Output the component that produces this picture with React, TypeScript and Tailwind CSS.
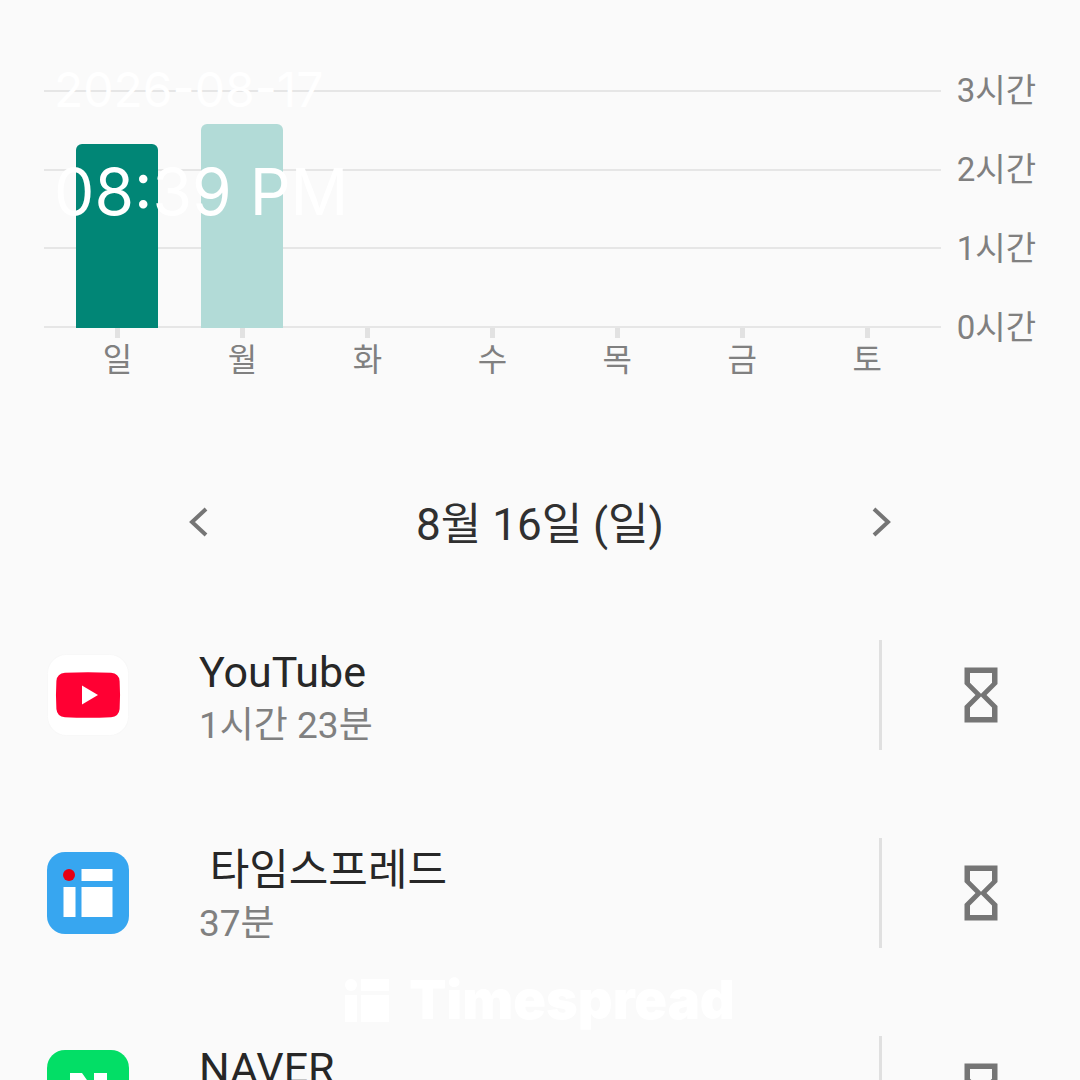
import React from "react"
import { MdHourglassEmpty } from "react-icons/md"

const hours = ["3시간", "2시간", "1시간", "0시간"]

const days = [
  { label: "일", height: 184, active: true },
  { label: "월", height: 204, active: false },
  { label: "화", height: 0, active: false },
  { label: "수", height: 0, active: false },
  { label: "목", height: 0, active: false },
  { label: "금", height: 0, active: false },
  { label: "토", height: 0, active: false },
]

const apps = [
  { name: "YouTube", time: "1시간 23분", icon: <YouTubeIcon /> },
  { name: " 타임스프레드", time: "37분", icon: <TimespreadIcon /> },
  { name: "NAVER", time: "", icon: <NaverIcon /> },
]

function YouTubeIcon() {
  return (
    <svg viewBox="0 0 82 82" className="size-[82px]" aria-hidden="true">
      <rect x="0.5" y="0.5" width="81" height="81" rx="19" fill="#fff" stroke="#f8f8f8" />
      <path
        d="M18 18.800Q41 17.500 64 18.800Q72 19.500 72.600 27Q73.500 41 72.600 55Q72 62.500 64 63.200Q41 64.500 18 63.200Q10 62.500 9.400 55Q8.500 41 9.400 27Q10 19.500 18 18.800Z"
        fill="#ff0033"
      />
      <path d="M35 31.500v19L51 41z" fill="#fff" />
    </svg>
  )
}

function TimespreadIcon() {
  return (
    <svg viewBox="0 0 82 82" className="size-[82px]" aria-hidden="true">
      <rect width="82" height="82" rx="18" fill="#37a6f0" />
      <circle cx="22" cy="23" r="6" fill="#e60012" />
      <path d="M34.500 17h31v12h-31zM16.500 35h12v30h-12zM34.500 35h31v30h-31z" fill="#fff" />
    </svg>
  )
}

function NaverIcon() {
  return (
    <svg viewBox="0 0 82 82" className="size-[82px]" aria-hidden="true">
      <rect width="82" height="82" rx="18" fill="#03de66" />
      <path d="M23 23h12l12 17V23h13v36H48L36 42v17H23z" fill="#fff" />
    </svg>
  )
}

function Chevron({ points }: { points: string }) {
  return (
    <svg viewBox="0 0 56 56" className="size-14" fill="none" stroke="#757575" strokeWidth="4" aria-hidden="true">
      <polyline points={points} />
    </svg>
  )
}

function UsageChart() {
  return (
    <section className="pl-11 pr-11 pt-[66px] flex">
      <div className="flex-1 min-w-0 pt-6">
        {/* Grid lines and bars share one cell */}
        <div className="grid">
          <div className="col-start-1 row-start-1 flex flex-col justify-between h-[238px]">
            {hours.map((hour) => (
              <div key={hour} className="h-[2px] bg-[#e6e6e6]" />
            ))}
          </div>
          <div className="col-start-1 row-start-1 grid grid-cols-7 items-end px-[11px]">
            {days.map((day) => (
              <div
                key={day.label}
                className={`mx-auto w-[82px] rounded-t-md ${day.active ? "bg-[#018676]" : "bg-[#b2dbd7]"}`}
                style={{ height: day.height }}
              />
            ))}
          </div>
        </div>
        <div className="grid grid-cols-7 px-[11px]">
          {days.map((day) => (
            <div key={day.label} className="flex flex-col items-center">
              <div className="w-[5px] h-2.5 bg-[#e2e2e2]" />
              <span className="text-[32px] leading-[44px] text-[#808080]">{day.label}</span>
            </div>
          ))}
        </div>
      </div>
      <div className="pl-4 flex flex-col justify-between h-[287px] text-[33px] leading-[50px] text-[#808080]">
        {hours.map((hour) => (
          <span key={hour}>{hour}</span>
        ))}
      </div>
    </section>
  )
}

function DateNav() {
  return (
    <nav className="mt-[107px] px-[171px] flex items-center justify-between">
      <button aria-label="이전 날짜">
        <Chevron points="35,15 21,28 35,41" />
      </button>
      <h1 className="pt-1.5 text-[44px] leading-[60px] text-[#303030]">8월 16일 (일)</h1>
      <button aria-label="다음 날짜">
        <Chevron points="21,15 35,28 21,41" />
      </button>
    </nav>
  )
}

function AppList() {
  return (
    <ul className="mt-[41px]">
      {apps.map((app) => (
        <li key={app.name} className="h-[198px] pl-[47px] flex items-center">
          {app.icon}
          <div className="ml-[70px] pt-1.5 flex-1 min-w-0">
            <p className="text-[43px] leading-[56px] whitespace-pre text-[#272727]">{app.name}</p>
            <p className="h-[52px] text-[37px] leading-[52px] text-[#808080]">{app.time}</p>
          </div>
          <button
            aria-label="타이머 설정"
            className="w-[201px] h-[110px] border-l-[3px] border-[#e0e0e0] flex items-center justify-center text-[#757575]"
          >
            <MdHourglassEmpty size={66} />
          </button>
        </li>
      ))}
    </ul>
  )
}

export default function App() {
  return (
    <main className="relative h-screen overflow-hidden bg-[#fafafa] font-[Roboto,'Noto_Sans_CJK_KR',sans-serif]">
      <UsageChart />
      <DateNav />
      <AppList />

      {/* Timestamp overlay */}
      <div className="absolute left-[54px] top-[60px] font-[Inter,sans-serif] text-white">
        <p className="text-[48px] leading-[60px]">2026-08-17</p>
        <p className="mt-8 text-[64px] leading-[80px]">08:39 PM</p>
      </div>

      {/* Watermark */}
      <div className="absolute inset-x-0 top-[970px] flex items-center justify-center gap-5 text-white">
        <svg viewBox="0 0 44 43" className="w-11 h-[43px]" fill="currentColor" aria-hidden="true">
          <circle cx="6" cy="6" r="6" />
          <path d="M16 0h28v12H16zM0 16h12v27H0zM16 16h28v27H16z" />
        </svg>
        <span className="font-[Inter,sans-serif] font-black text-[54px] leading-[60px]">Timespread</span>
      </div>
    </main>
  )
}
